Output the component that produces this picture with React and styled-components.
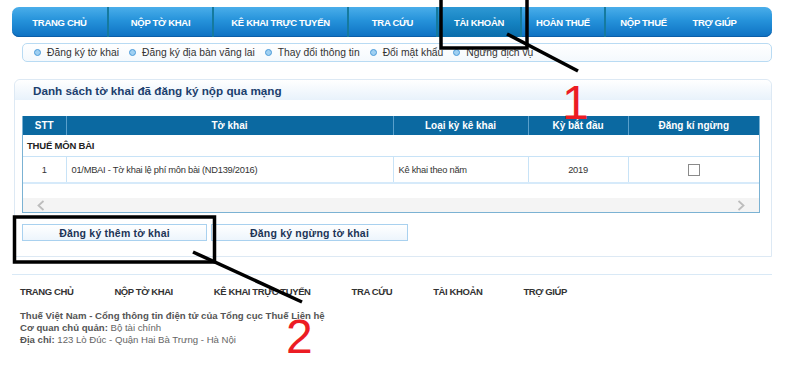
import React from "react";
import styled, { createGlobalStyle } from "styled-components";

const Global = createGlobalStyle`
  html, body { margin: 0; padding: 0; background: #fff; }
  body { font-family: "Liberation Sans", Arial, sans-serif; color: #333; }
`;

const topMenu = [
  { label: "TRANG CHỦ", w: 97, line: true },
  { label: "NỘP TỜ KHAI", w: 105, line: true },
  { label: "KÊ KHAI TRỰC TUYẾN", w: 135, line: true },
  { label: "TRA CỨU", w: 89, line: true },
  { label: "TÀI KHOẢN", w: 84, line: true, active: true },
  { label: "HOÀN THUẾ", w: 84, line: true },
  { label: "NỘP THUẾ", w: 75 },
  { label: "TRỢ GIÚP", w: 67 },
];

const subMenu = [
  "Đăng ký tờ khai",
  "Đăng ký địa bàn vãng lai",
  "Thay đổi thông tin",
  "Đổi mật khẩu",
  "Ngừng dịch vụ",
];

const footMenu = ["TRANG CHỦ", "NỘP TỜ KHAI", "KÊ KHAI TRỰC TUYẾN", "TRA CỨU", "TÀI KHOẢN", "TRỢ GIÚP"];

const ChevronIcon = ({ dir }) => (
  <svg width="8" height="11" viewBox="0 0 8 11">
    <polyline
      points={dir === "left" ? "6.5,1 1.5,5.5 6.5,10" : "1.5,1 6.5,5.5 1.5,10"}
      fill="none"
      stroke="#bdbdbd"
      strokeWidth="1.8"
    />
  </svg>
);

const App = () => {
  return (
    <Page>
      <Global />
      <NavBar>
        {topMenu.map((m) => (
          <NavItem key={m.label} $w={m.w} $line={m.line} $active={m.active}>
            {m.label}
          </NavItem>
        ))}
      </NavBar>

      <SubNav>
        {subMenu.map((s) => (
          <SubItem key={s}>
            <Bullet />
            {s}
          </SubItem>
        ))}
      </SubNav>

      <Panel>
        <PanelHead>Danh sách tờ khai đã đăng ký nộp qua mạng</PanelHead>
        <PanelBody>
          <TableBox>
            <Table>
              <colgroup>
                <col style={{ width: 43 }} />
                <col style={{ width: 327 }} />
                <col style={{ width: 135 }} />
                <col style={{ width: 100 }} />
                <col />
              </colgroup>
              <thead>
                <tr>
                  <Th>STT</Th>
                  <Th>Tờ khai</Th>
                  <Th>Loại kỳ kê khai</Th>
                  <Th>Kỳ bắt đầu</Th>
                  <Th>Đăng kí ngừng</Th>
                </tr>
              </thead>
              <tbody>
                <tr>
                  <GroupCell colSpan={5}>THUẾ MÔN BÀI</GroupCell>
                </tr>
                <tr>
                  <Td $center>1</Td>
                  <Td>01/MBAI - Tờ khai lệ phí môn bài (ND139/2016)</Td>
                  <Td>Kê khai theo năm</Td>
                  <Td $center>2019</Td>
                  <Td $center>
                    <Check />
                  </Td>
                </tr>
              </tbody>
            </Table>
            <Spacer />
            <ScrollTrack>
              <ChevronIcon dir="left" />
              <ChevronIcon dir="right" />
            </ScrollTrack>
          </TableBox>
          <Buttons>
            <Button $w={185}>Đăng ký thêm tờ khai</Button>
            <Button $w={197}>Đăng ký ngừng tờ khai</Button>
          </Buttons>
        </PanelBody>
      </Panel>

      <Footer>
        <FootNav>
          {footMenu.map((f) => (
            <FootLink key={f}>{f}</FootLink>
          ))}
        </FootNav>
        <FootInfo>
          <b>Thuế Việt Nam - Cổng thông tin điện tử của Tổng cục Thuế Liên hệ</b>
          <div>
            <b>Cơ quan chủ quản:</b> Bộ tài chính
          </div>
          <div>
            <b>Địa chỉ:</b> 123 Lò Đúc - Quận Hai Bà Trưng - Hà Nội
          </div>
        </FootInfo>
      </Footer>

      <Marks width="800" height="390" viewBox="0 0 800 390">
        <rect x="441" y="-4" width="86" height="52" fill="none" stroke="#000" strokeWidth="3.5" />
        <line x1="507" y1="34" x2="578" y2="71" stroke="#000" strokeWidth="3.5" />
        <rect x="14.5" y="217" width="200" height="45" fill="none" stroke="#000" strokeWidth="3.5" />
        <line x1="193" y1="252" x2="302" y2="302" stroke="#000" strokeWidth="3.5" />
      </Marks>
      <Digit $x={562} $y={79}>1</Digit>
      <Digit $x={286} $y={313}>2</Digit>
    </Page>
  );
};

export default App;

const Page = styled.div`
  position: relative;
  width: 800px;
  height: 390px;
  overflow: hidden;
  padding-top: 7px;
  box-sizing: border-box;
`;

const NavBar = styled.div`
  display: flex;
  margin: 0 28px 0 12px;
  height: 30px;
  border-radius: 7px;
  overflow: hidden;
  background: linear-gradient(180deg, #4aaeea 0%, #2592da 45%, #0e71c2 100%);
  box-shadow: inset 0 -1px 0 #0b5ea8;
`;

const NavItem = styled.div`
  width: ${(p) => p.$w}px;
  flex: none;
  display: flex;
  align-items: center;
  justify-content: center;
  color: #fff;
  font-weight: bold;
  font-size: 9.5px;
  letter-spacing: -0.3px;
  white-space: nowrap;
  box-sizing: border-box;
  border-right: ${(p) => (p.$line ? "2px solid #157a9e" : "none")};
  background: ${(p) =>
    p.$active ? "linear-gradient(180deg, #2e98d4 0%, #1583c2 50%, #0a6dab 100%)" : "transparent"};
`;

const SubNav = styled.div`
  display: flex;
  align-items: center;
  margin: 6px 28px 0 22px;
  height: 19px;
  box-sizing: border-box;
  border: 1px solid #b9dbf3;
  border-radius: 5px;
  background: linear-gradient(180deg, #ffffff 0%, #f4f9fd 100%);
  padding-left: 11px;
`;

const SubItem = styled.div`
  display: flex;
  align-items: center;
  font-size: 10.3px;
  color: #333;
  margin-right: 10px;
  white-space: nowrap;
`;

const Bullet = styled.span`
  width: 5px;
  height: 5px;
  border-radius: 50%;
  background: #9fd0f2;
  border: 1px solid #4d9bd8;
  margin-right: 6px;
`;

const Panel = styled.div`
  margin: 17px 28px 0 14px;
  border: 1px solid #dde9f4;
  border-radius: 6px 6px 0 0;
  height: 178px;
  box-sizing: border-box;
`;

const PanelHead = styled.div`
  height: 20px;
  line-height: 21px;
  padding-left: 18px;
  font-size: 11.7px;
  font-weight: bold;
  color: #1c3f6e;
  border-radius: 6px 6px 0 0;
  background: linear-gradient(180deg, #ffffff 0%, #e8f2fb 100%);
`;

const PanelBody = styled.div`
  padding: 16px 11px 0 7px;
`;

const TableBox = styled.div`
  border: 1.5px solid #7bb2d3;
  border-top: none;
`;

const Table = styled.table`
  width: 100%;
  border-collapse: collapse;
  table-layout: fixed;
`;

const Th = styled.th`
  height: 19px;
  padding: 0;
  background: #0b69a1;
  color: #fff;
  font-size: 10px;
  font-weight: bold;
  border-left: 1px solid #5aa0cc;
  &:first-child { border-left: none; }
`;

const GroupCell = styled.td`
  height: 21px;
  padding: 0 0 0 4px;
  font-size: 9.5px;
  font-weight: bold;
  color: #222;
  letter-spacing: -0.2px;
  border-bottom: 1px solid #c8e3f7;
`;

const Td = styled.td`
  height: 25px;
  padding: 0 5px;
  font-size: 9.3px;
  letter-spacing: -0.25px;
  color: #333;
  text-align: ${(p) => (p.$center ? "center" : "left")};
  border-left: 1px solid #c8e3f7;
  border-bottom: 2px solid #d6eafa;
  &:first-child { border-left: none; }
`;

const Check = styled.span`
  display: inline-block;
  width: 10px;
  height: 10px;
  border: 1px solid #8a8a8a;
  background: #fff;
  vertical-align: middle;
`;

const Spacer = styled.div`
  height: 14px;
`;

const ScrollTrack = styled.div`
  height: 14px;
  background: #f4f4f4;
  display: flex;
  align-items: center;
  justify-content: space-between;
  padding: 0 14px 0 14px;
`;

const Buttons = styled.div`
  display: flex;
  gap: 4px;
  margin-top: 11px;
`;

const Button = styled.div`
  width: ${(p) => p.$w}px;
  height: 17px;
  box-sizing: border-box;
  border: 1px solid #a9d1ef;
  background: linear-gradient(180deg, #ffffff 0%, #edf5fc 100%);
  display: flex;
  align-items: center;
  justify-content: center;
  font-size: 10.5px;
  font-weight: bold;
  color: #1c3456;
  letter-spacing: 0.2px;
`;

const Footer = styled.div`
  margin: 17px 28px 0 12px;
  border-top: 1.5px solid #d9e9f6;
  padding: 11px 0 0 8px;
`;

const FootNav = styled.div`
  display: flex;
  gap: 41px;
`;

const FootLink = styled.div`
  font-size: 9.5px;
  letter-spacing: -0.4px;
  font-weight: bold;
  color: #333;
  white-space: nowrap;
`;

const FootInfo = styled.div`
  margin-top: 13px;
  font-size: 9.6px;
  line-height: 12px;
  color: #666;
  b { color: #555; }
`;

const Marks = styled.svg`
  position: absolute;
  left: 0;
  top: 0;
  pointer-events: none;
`;

const Digit = styled.div`
  position: absolute;
  left: ${(p) => p.$x}px;
  top: ${(p) => p.$y}px;
  font-family: "Liberation Sans", Arial, sans-serif;
  font-size: 48px;
  line-height: 48px;
  color: #ec1c24;
`;
